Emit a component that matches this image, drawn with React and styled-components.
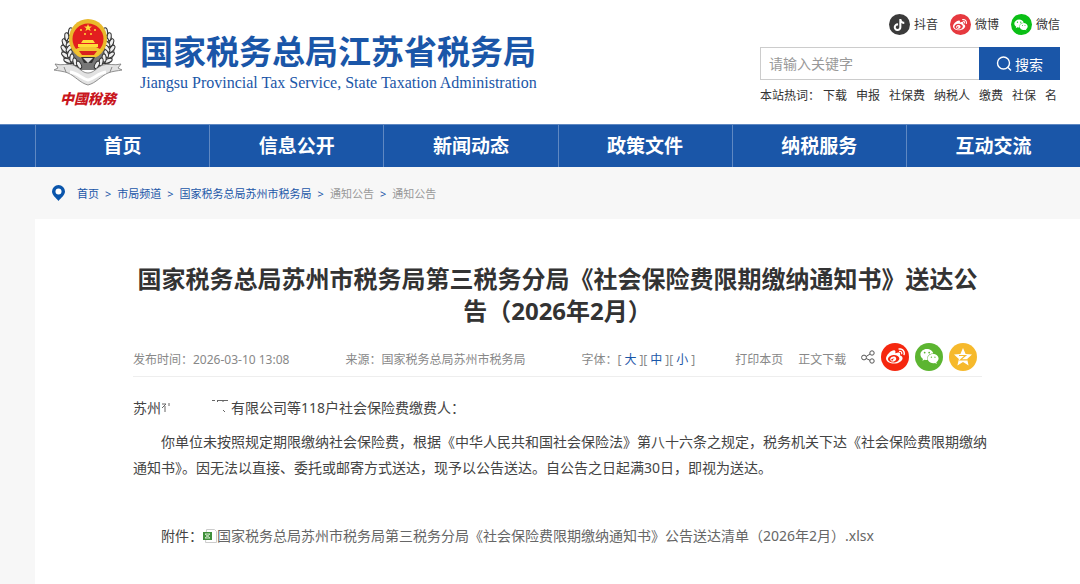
import { useState } from 'react';
import styled, { createGlobalStyle } from 'styled-components';
import { FaTiktok, FaWeibo, FaWeixin } from 'react-icons/fa';

const GlobalStyle = createGlobalStyle`
  * {
    box-sizing: border-box;
  }
  body {
    margin: 0;
    background: #f7f7f7;
    color: #333;
    font-family: "Noto Sans", "Noto Sans CJK SC", sans-serif;
    font-size: 12px;
  }
  a {
    color: inherit;
    text-decoration: none;
  }
`;

const Header = styled.header`
  display: flex;
  justify-content: space-between;
  height: 124px;
  padding: 0 20px 0 54px;
  background: #fff;
`;

const Brand = styled.a`
  display: flex;
  gap: 18px;
  padding-top: 18px;
`;

const Emblem = styled.div`
  width: 68px;
`;

const EmblemText = styled.div`
  color: #c8161d;
  font-size: 14px;
  font-style: italic;
  font-weight: 900;
  line-height: 18px;
  text-align: center;
`;

const BrandText = styled.div`
  padding-top: 14px;
  color: #1a56a8;
`;

const BrandName = styled.div`
  font-size: 33px;
  font-weight: 700;
  line-height: 40px;
`;

const BrandEnglish = styled.div`
  font-family: "Liberation Serif", serif;
  font-size: 16px;
  line-height: 22px;
`;

const Tools = styled.div`
  width: 300px;
  padding-top: 14px;
`;

const Social = styled.div`
  display: flex;
  justify-content: flex-end;
  gap: 12px;
  margin-bottom: 12px;
`;

const SocialLink = styled.a`
  display: flex;
  align-items: center;
  gap: 4px;
  line-height: 21px;
`;

const Round = styled.span`
  display: flex;
  align-items: center;
  justify-content: center;
  width: ${(props) => props.$size}px;
  height: ${(props) => props.$size}px;
  border-radius: 50%;
  background: ${(props) => props.$color};
  color: #fff;
`;

const SearchForm = styled.form`
  display: flex;
  height: 33px;
`;

const SearchInput = styled.input`
  flex: 1;
  min-width: 0;
  padding: 0 8px;
  border: 1px solid #ccc;
  border-right: 0;
  border-radius: 0;
  font-family: inherit;
  font-size: 14px;

  &::placeholder {
    color: #999;
  }
`;

const SearchButton = styled.button`
  display: flex;
  align-items: center;
  justify-content: center;
  gap: 3px;
  width: 81px;
  border: 0;
  background: #1a56a8;
  color: #fff;
  font-family: inherit;
  font-size: 14px;
`;

const HotWords = styled.div`
  display: flex;
  margin-top: 6px;
  line-height: 20px;
  white-space: nowrap;

  a {
    margin-left: 3px;
  }
  a + a {
    margin-left: 9px;
  }
`;

const Nav = styled.nav`
  display: flex;
  height: 43px;
  padding-left: 35px;
  border-top: 1px solid #5f88c2;
  background: #1a56a8;
`;

const NavLink = styled.a`
  flex: 1;
  border-left: 1px solid #5f88c2;
  color: #fff;
  font-size: 19px;
  font-weight: 700;
  line-height: 42px;
  text-align: center;
`;

const BreadCrumbs = styled.nav`
  display: flex;
  align-items: center;
  gap: 6px;
  height: 52px;
  padding-left: 52px;
  color: #1a56a8;
  font-size: 11px;

  svg {
    margin-right: 6px;
  }
`;

const Crumb = styled.a`
  color: ${(props) => (props.$muted ? '#999' : '#1a56a8')};
`;

const Article = styled.main`
  margin-left: 35px;
  padding: 44px 98px 37px;
  background: #fff;
`;

const Title = styled.h1`
  margin: 0;
  font-size: 24px;
  font-weight: 700;
  line-height: 32px;
  text-align: center;
`;

const Meta = styled.div`
  display: flex;
  align-items: center;
  height: 38px;
  margin-top: 12px;
  padding-bottom: 2px;
  border-bottom: 1px solid #eee;
  color: #888;
  white-space: nowrap;
`;

const MetaItem = styled.div`
  margin-right: ${(props) => props.$space}px;
  padding-top: 4px;
`;

const TextButton = styled.button`
  padding: 0 ${(props) => (props.$blue ? 3 : 0)}px;
  border: 0;
  background: none;
  color: ${(props) => (props.$blue ? '#1a56a8' : 'inherit')};
  font: inherit;
`;

const Share = styled.div`
  display: flex;
  align-items: center;
  gap: 6px;
`;

/* the text column runs slightly past the rule above it */
const Content = styled.div`
  margin-right: -16px;
  padding-top: 18px;
  color: #444;
  font-size: 14px;
  line-height: 26px;
`;

const Paragraph = styled.p`
  margin: 0 0 8px;
  text-indent: ${(props) => (props.$indent ? '2em' : 0)};
`;

const Attachment = styled.p`
  display: flex;
  align-items: center;
  margin: 42px 0 0;
  padding-left: 28px;

  a {
    display: flex;
    align-items: center;
    color: #666;
  }
`;

const leaves = [35, 50, 65, 80, 95, 110, 125, 140];

const EmblemIcon = () => (
  <svg width="68" height="68" viewBox="0 0 68 68">
    <path d="M14 14C4 24 5 44 20 52h28C63 44 64 24 54 14z" fill="#777" />
    {leaves.map((angle) => (
      <g key={angle} fill="#eee" stroke="#333" strokeWidth="1">
        <ellipse cx="34" cy="6" rx="4" ry="2" transform={`rotate(${angle + 12} 34 30) rotate(35 34 6)`} />
        <ellipse cx="34" cy="6" rx="4" ry="2" transform={`rotate(${-angle - 12} 34 30) rotate(-35 34 6)`} />
        <ellipse cx="34" cy="11" rx="4" ry="2" transform={`rotate(${angle + 12} 34 30) rotate(-35 34 11)`} />
        <ellipse cx="34" cy="11" rx="4" ry="2" transform={`rotate(${-angle - 12} 34 30) rotate(35 34 11)`} />
      </g>
    ))}
    <ellipse cx="34" cy="21" rx="19" ry="20" fill="#e9b92c" />
    <circle cx="34" cy="21" r="15.500" fill="#e31e1f" />
    <path d="M20 32l6-3h16l6 3-3 5c-3 4-19 4-22 0z" fill="#f2c431" />
    <path d="M25 33h18l-3 4H28z" fill="#d8211d" />
    <path d="M34 6l1.100 2.600h2.900l-2.300 1.700.9 2.700-2.600-1.600-2.600 1.600.9-2.700L30 8.600h2.900z" fill="#ffdc3a" />
    <g fill="#ffdc3a">
      <circle cx="27" cy="12" r="1" />
      <circle cx="41" cy="12" r="1" />
      <circle cx="31" cy="16" r="1" />
      <circle cx="37" cy="16" r="1" />
      <path d="M29 22h10l2 3H27zM24 26h20v3H24z" />
    </g>
    <path d="M27 39h14l-3 6h-8z" fill="#333" />
    <path d="M29 40h10l-5 5z" fill="#ddd" />
    <path d="M0 52l4-2-3-4c7 2 13-1 18 1 6 2 9 8 15 8s9-6 15-8c5-2 11 1 18-1l-3 4 4 2c-5 1-9 1-14 3-7 3-12 10-20 12-8-2-13-9-20-12-5-2-9-2-14-3z" fill="#e2e2e2" stroke="#777" strokeWidth=".8" />
    <path d="M10 49l2 5M58 49l-2 5" stroke="#888" />
    <path d="M16 54c8 1 12 7 18 8 6-1 10-7 18-8" fill="none" stroke="#fff" strokeWidth="3" />
  </svg>
);

const SearchIcon = () => (
  <svg width="16" height="16" viewBox="0 0 16 16" fill="none" stroke="#fff" strokeWidth="1.400">
    <circle cx="7.500" cy="7" r="6" />
    <path d="M12 11.500l3 3" />
  </svg>
);

const PinIcon = () => (
  <svg width="13" height="16" viewBox="0 0 13 16">
    <path d="M6.500 0a6.500 6.500 0 0 1 6.500 6.500c0 3.500-4 6.500-6.500 9.500-2.500-3-6.500-6-6.500-9.500A6.500 6.500 0 0 1 6.500 0z" fill="#0a55ab" />
    <circle cx="6.500" cy="6.500" r="3" fill="#fff" />
  </svg>
);

const ShareIcon = () => (
  <svg width="14" height="14" viewBox="0 0 14 14" fill="none" stroke="#555">
    <circle cx="3" cy="7.500" r="2.400" />
    <circle cx="11" cy="3" r="2.200" />
    <circle cx="11" cy="11" r="2.200" />
    <path d="M5.200 6.500L9 4M5.200 8.500L9 10.300" />
  </svg>
);

const StarIcon = () => (
  <svg width="18" height="18" viewBox="0 0 18 18">
    <path d="M9 0l2.600 6 6.400.6-4.900 4.300 1.500 6.500L9 14l-5.600 3.400 1.500-6.500L0 6.600 6.400 6z" fill="#fff" />
    <path d="M5 7.500h6.500l-5 4.300h7" fill="none" stroke="#f6b92c" strokeWidth="1.200" />
  </svg>
);

const SheetIcon = () => (
  <svg width="14" height="14" viewBox="0 0 14 14">
    <path d="M3.500.5h8l2 2v11h-11z" fill="#fff" stroke="#ccc" />
    <path d="M0 3h9v8H0z" fill="#3f8f3a" />
    <path d="M2 5h5M2 9h5M2 5l5 4M7 5L2 9" stroke="#cfe8c8" />
  </svg>
);

// what is left of the company name after it has been blanked out
const Redacted = () => (
  <svg width="70" height="14" viewBox="0 0 70 14" fill="none" stroke="#666">
    <path d="M1 5h4L1 9M4 7v6M8 4v3" />
    <path d="M51 1.500h3M56 1.500h11M58 1l-2 2M62 1v2M62 11l2 2" />
  </svg>
);

const menu = ['首页', '信息公开', '新闻动态', '政策文件', '纳税服务', '互动交流'];
const hotWords = ['下载', '申报', '社保费', '纳税人', '缴费', '社保', '名'];

const App = () => {
  const [keyword, setKeyword] = useState('');

  return (
    <>
      <GlobalStyle />
      <Header>
        <Brand href="#">
          <Emblem>
            <EmblemIcon />
            <EmblemText>中國稅務</EmblemText>
          </Emblem>
          <BrandText>
            <BrandName>国家税务总局江苏省税务局</BrandName>
            <BrandEnglish>Jiangsu Provincial Tax Service, State Taxation Administration</BrandEnglish>
          </BrandText>
        </Brand>
        <Tools>
          <Social>
            <SocialLink href="#"><Round $size={21} $color="#3b3b3b"><FaTiktok size={12} /></Round>抖音</SocialLink>
            <SocialLink href="#"><Round $size={21} $color="#e6393f"><FaWeibo size={14} /></Round>微博</SocialLink>
            <SocialLink href="#"><Round $size={21} $color="#0abf15"><FaWeixin size={14} /></Round>微信</SocialLink>
          </Social>
          <SearchForm onSubmit={(e) => e.preventDefault()}>
            <SearchInput
              aria-label="请输入关键字"
              placeholder="请输入关键字"
              value={keyword}
              onChange={(e) => setKeyword(e.target.value)}
            />
            <SearchButton><SearchIcon />搜索</SearchButton>
          </SearchForm>
          <HotWords>
            <span>本站热词：</span>
            {hotWords.map((word) => <a href="#" key={word}>{word}</a>)}
          </HotWords>
        </Tools>
      </Header>
      <Nav>
        {menu.map((item) => <NavLink href="#" key={item}>{item}</NavLink>)}
      </Nav>
      <BreadCrumbs>
        <PinIcon />
        <Crumb href="#">首页</Crumb>&gt;
        <Crumb href="#">市局频道</Crumb>&gt;
        <Crumb href="#">国家税务总局苏州市税务局</Crumb>&gt;
        <Crumb href="#" $muted>通知公告</Crumb>&gt;
        <Crumb href="#" $muted>通知公告</Crumb>
      </BreadCrumbs>
      <Article>
        <Title>国家税务总局苏州市税务局第三税务分局《社会保险费限期缴纳通知书》送达公告（2026年2月）</Title>
        <Meta>
          <MetaItem $space={56}>发布时间：2026-03-10 13:08</MetaItem>
          <MetaItem $space={56}>来源：国家税务总局苏州市税务局</MetaItem>
          <MetaItem $space={40}>
            字体：[<TextButton $blue>大</TextButton>][<TextButton $blue>中</TextButton>][<TextButton $blue>小</TextButton>]
          </MetaItem>
          <MetaItem $space={15}><TextButton>打印本页</TextButton></MetaItem>
          <MetaItem $space={15}><TextButton>正文下载</TextButton></MetaItem>
          <Share>
            <ShareIcon />
            <Round as="a" href="#" aria-label="微博" $size={28} $color="#f5270f"><FaWeibo size={19} /></Round>
            <Round as="a" href="#" aria-label="微信" $size={28} $color="#5cb531"><FaWeixin size={19} /></Round>
            <Round as="a" href="#" aria-label="收藏" $size={28} $color="#f6b92c"><StarIcon /></Round>
          </Share>
        </Meta>
        <Content>
          <Paragraph>苏州<Redacted />有限公司等118户社会保险费缴费人：</Paragraph>
          <Paragraph $indent>
            你单位未按照规定期限缴纳社会保险费，根据《中华人民共和国社会保险法》第八十六条之规定，税务机关下达《社会保险费限期缴纳通知书》。因无法以直接、委托或邮寄方式送达，现予以公告送达。自公告之日起满30日，即视为送达。
          </Paragraph>
          <Attachment>
            附件：
            <a href="#"><SheetIcon />国家税务总局苏州市税务局第三税务分局《社会保险费限期缴纳通知书》公告送达清单（2026年2月）.xlsx</a>
          </Attachment>
        </Content>
      </Article>
    </>
  );
};

export default App;
